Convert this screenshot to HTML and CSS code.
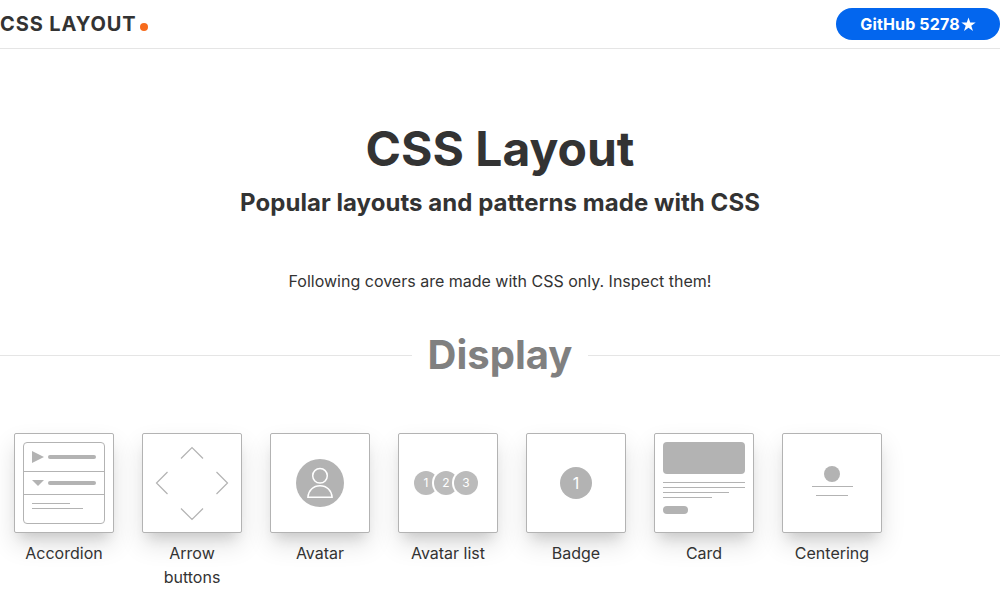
FILE: index.html
```html
<!DOCTYPE html>
<html lang="en">
<head>
<meta charset="utf-8">
<title>CSS Layout</title>
<link rel="stylesheet" href="styles.css">
</head>
<body>
<header class="header">
  <a class="logo">CSS LAYOUT<span class="logo-dot"></span></a>
  <a class="github">GitHub 5278<svg class="star" viewBox="0 0 14 14"><path d="M7 .4l1.6 4.8h5.1L9.6 8.2l1.6 4.9L7 10.1l-4.200 3 1.600-4.900L.3 5.200h5.100z"/></svg></a>
</header>
<main>
  <section class="hero">
    <h1 class="title">CSS Layout</h1>
    <h2 class="subtitle">Popular layouts and patterns made with CSS</h2>
  </section>
  <p class="intro">Following covers are made with CSS only. Inspect them!</p>
  <h2 class="category"><span class="category-name">Display</span></h2>
  <div class="patterns">
    <a class="pattern">
      <div class="cover cover-padded">
        <div class="accordion">
          <div class="accordion-row"><span class="tri-right"></span><span class="bar"></span></div>
          <div class="accordion-row"><span class="tri-down"></span><span class="bar"></span></div>
          <div class="accordion-body"><div class="line w60"></div><div class="line w80"></div></div>
        </div>
      </div>
      <h4 class="name">Accordion</h4>
    </a>
    <a class="pattern">
      <div class="cover">
        <svg class="arrows" viewBox="0 0 98 98"><path d="M38 24.500l11-11 11 11M38 74.500l11 11 11-11M24.500 38l-11 11 11 11M73.500 38l11 11-11 11"/></svg>
      </div>
      <h4 class="name">Arrow buttons</h4>
    </a>
    <a class="pattern">
      <div class="cover">
        <div class="avatar"><svg class="person" viewBox="0 0 32 32"><circle cx="16" cy="8.800" r="7.300"/><path d="M3.900 30.300c.4-6.700 5.300-11.500 12.100-11.500s11.700 4.800 12.100 11.500z"/></svg></div>
      </div>
      <h4 class="name">Avatar</h4>
    </a>
    <a class="pattern">
      <div class="cover">
        <div class="avatars"><span class="mini">1</span><span class="mini">2</span><span class="mini">3</span></div>
      </div>
      <h4 class="name">Avatar list</h4>
    </a>
    <a class="pattern">
      <div class="cover"><div class="badge">1</div></div>
      <h4 class="name">Badge</h4>
    </a>
    <a class="pattern">
      <div class="cover cover-padded">
        <div class="card">
          <div class="card-image"></div>
          <div class="line"></div>
          <div class="line"></div>
          <div class="line w80"></div>
          <div class="line w60"></div>
          <div class="card-button"></div>
        </div>
      </div>
      <h4 class="name">Card</h4>
    </a>
    <a class="pattern">
      <div class="cover cover-padded">
        <div class="centering">
          <div class="dot"></div>
          <div class="line w50"></div>
          <div class="line w40"></div>
        </div>
      </div>
      <h4 class="name">Centering</h4>
    </a>
  </div>
</main>
</body>
</html>
```
FILE: styles.css
```css
* { box-sizing: border-box; }
body {
  margin: 0;
  color: #333;
  font: 16px/24px Inter, sans-serif;
  overflow: hidden;
}
h1, h2, h4, p { margin: 0; }

.header {
  display: flex;
  align-items: center;
  justify-content: space-between;
  height: 49px;
  border-bottom: 1px solid #e5e5e5;
}
.logo {
  display: flex;
  align-items: center;
  font-size: 20px;
  font-weight: 700;
  letter-spacing: .9px;
}
.logo-dot {
  width: 8px;
  height: 8px;
  margin: 6px 0 0 3px;
  border-radius: 50%;
  background: #f76b1c;
}
.github {
  display: flex;
  align-items: center;
  justify-content: center;
  width: 164px;
  height: 32px;
  border-radius: 16px;
  background: #0366ee;
  color: #fff;
  font-weight: 700;
  letter-spacing: .15px;
}
.star { width: 15px; height: 15px; margin-left: 1px; fill: #fff; }

.hero { padding-top: 72px; text-align: center; }
.title { font-size: 48px; line-height: 56px; font-weight: 700; }
.subtitle { margin-top: 10px; font-size: 24px; line-height: 32px; font-weight: 700; letter-spacing: .05px; }
.intro { margin-top: 50px; text-align: center; }

.category {
  display: flex;
  align-items: center;
  margin-top: 38px;
  color: gray;
  font-size: 40px;
  line-height: 48px;
  font-weight: 700;
}
.category::before, .category::after {
  content: "";
  flex: 1;
  height: 1px;
  background: #e5e5e5;
}
.category-name { padding: 0 16px; }

.patterns { display: flex; margin-top: 54px; }
.pattern { width: 128px; padding: 0 14px; }
.name { margin-top: 8px; font-size: 16px; font-weight: 400; text-align: center; }
.cover {
  display: flex;
  align-items: center;
  justify-content: center;
  height: 100px;
  border: 1px solid #b3b3b3;
  border-radius: 2px;
  background: #fff;
  box-shadow: 0 12px 24px rgba(0, 0, 0, .12), 0 10px 12px -6px rgba(0, 0, 0, .12);
}
.cover-padded { padding: 8px; }

.line { height: 1px; background: #b3b3b3; }
.w80 { width: 80%; }
.w60 { width: 60%; }
.w50 { width: 50%; }
.w40 { width: 40%; }

.accordion {
  width: 100%;
  height: 100%;
  border: 1px solid #b3b3b3;
  border-radius: 4px;
}
.accordion-row {
  display: flex;
  align-items: center;
  gap: 4px;
  padding: 8px;
  border-bottom: 1px solid #b3b3b3;
}
.accordion-body { display: grid; gap: 4px; padding: 8px; }
.tri-right {
  border: 6px solid transparent;
  border-left: 12px solid #b3b3b3;
  border-right: 0;
}
.tri-down {
  border: 6px solid transparent;
  border-top-color: #b3b3b3;
  border-bottom: 0;
}
.bar { flex: 1; height: 4px; border-radius: 2px; background: #b3b3b3; }

.arrows { width: 98px; height: 98px; fill: none; stroke: #b3b3b3; stroke-width: 1.2; }

.avatar, .mini, .badge {
  display: flex;
  align-items: center;
  justify-content: center;
  border-radius: 50%;
  background: #b3b3b3;
  color: #fff;
}
.avatar { width: 48px; height: 48px; }
.person { width: 32px; height: 32px; fill: none; stroke: #fff; stroke-width: 1.5; }
.avatars { display: flex; padding-right: 8px; }
.mini {
  width: 24px;
  height: 24px;
  margin-right: -4px;
  background: #bbb;
  font-size: 12px;
  box-shadow: 0 0 0 2px #fff;
}
.badge { width: 32px; height: 32px; }

.card { width: 100%; height: 100%; }
.card-image { height: 32px; margin-bottom: 8px; border-radius: 4px; background: #b3b3b3; }
.card .line { margin-bottom: 4px; }
.card-button { width: 30%; height: 8px; margin-top: 8px; border-radius: 4px; background: #b3b3b3; }

.centering {
  display: flex;
  flex-direction: column;
  align-items: center;
  width: 100%;
  padding-bottom: 4px;
}
.dot { width: 16px; height: 16px; margin-bottom: 4px; border-radius: 50%; background: #b3b3b3; }
.centering .w50 { margin-bottom: 8px; }
```
